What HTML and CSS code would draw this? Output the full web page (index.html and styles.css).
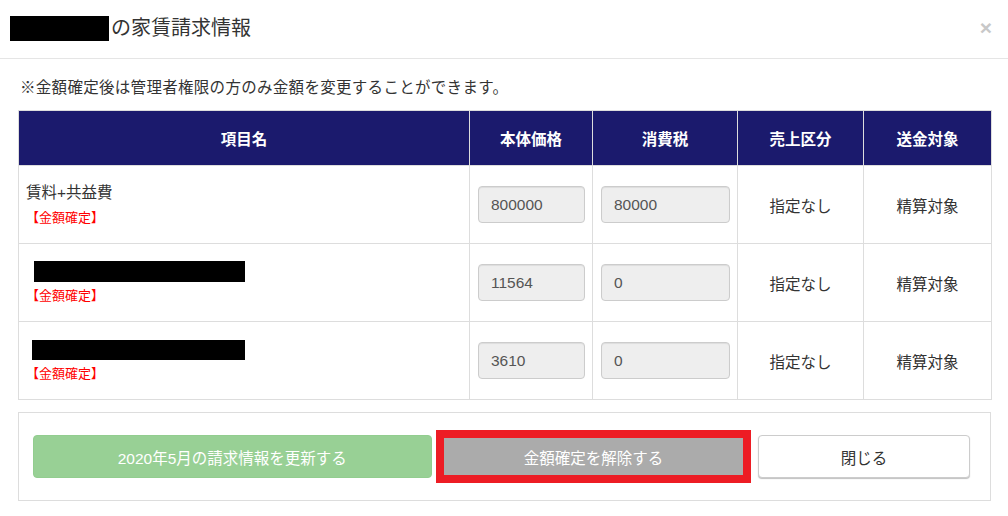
FILE: index.html
```html
<!DOCTYPE html>
<html lang="ja">
<head>
<meta charset="utf-8">
<title>家賃請求情報</title>
<link rel="stylesheet" href="styles.css">
</head>
<body>
<div class="modal">
  <div class="modal-header">
    <h4 class="modal-title"><span class="redact redact-title"></span>の家賃請求情報</h4>
    <span class="close">×</span>
  </div>
  <div class="modal-body">
    <p class="notice">※金額確定後は管理者権限の方のみ金額を変更することができます。</p>
    <table class="bill">
      <colgroup>
        <col class="c-name"><col class="c-price"><col class="c-tax"><col class="c-kind"><col class="c-target">
      </colgroup>
      <thead>
        <tr><th>項目名</th><th>本体価格</th><th>消費税</th><th>売上区分</th><th>送金対象</th></tr>
      </thead>
      <tbody>
        <tr>
          <td class="name"><div class="item">賃料+共益費</div><div class="fixed">【金額確定】</div></td>
          <td class="num"><input class="field" type="text" value="800000" disabled></td>
          <td class="num"><input class="field" type="text" value="80000" disabled></td>
          <td class="center">指定なし</td>
          <td class="center">精算対象</td>
        </tr>
        <tr>
          <td class="name"><div class="item"><span class="redact redact-a"></span></div><div class="fixed">【金額確定】</div></td>
          <td class="num"><input class="field" type="text" value="11564" disabled></td>
          <td class="num"><input class="field" type="text" value="0" disabled></td>
          <td class="center">指定なし</td>
          <td class="center">精算対象</td>
        </tr>
        <tr>
          <td class="name"><div class="item"><span class="redact redact-b"></span></div><div class="fixed">【金額確定】</div></td>
          <td class="num"><input class="field" type="text" value="3610" disabled></td>
          <td class="num"><input class="field" type="text" value="0" disabled></td>
          <td class="center">指定なし</td>
          <td class="center">精算対象</td>
        </tr>
      </tbody>
    </table>
    <div class="actions">
      <button class="btn btn-update" type="button">2020年5月の請求情報を更新する</button>
      <div class="highlight"><button class="btn btn-release" type="button">金額確定を解除する</button></div>
      <button class="btn btn-close" type="button">閉じる</button>
    </div>
  </div>
</div>
</body>
</html>
```

FILE: styles.css
```css
* { box-sizing: border-box; }
html, body {
  margin: 0;
  padding: 0;
  background: #fff;
}
body {
  font-family: "Liberation Sans", "Noto Sans CJK JP", sans-serif;
  font-size: 15.5px;
  color: #333;
}
.modal {
  width: 1008px;
}
.modal-header {
  height: 59px;
  border-bottom: 1px solid #e5e5e5;
  display: flex;
  align-items: center;
  justify-content: space-between;
  padding: 0 16px 2px 10px;
}
.modal-title {
  margin: 0;
  font-size: 20px;
  font-weight: normal;
  line-height: 26px;
  display: flex;
  align-items: center;
  color: #333;
}
.redact {
  display: inline-block;
  background: #000;
}
.redact-title {
  width: 99px;
  height: 25px;
  margin-right: 2px;
}
.close {
  font-size: 21px;
  font-weight: bold;
  color: #c8c8c8;
  line-height: 1;
  margin-top: -2px;
}
.modal-body {
  padding: 18px 17px 0 18px;
}
.notice {
  margin: 0 0 11px 2px;
  line-height: 22px;
  letter-spacing: 0.3px;
}
.bill {
  width: 973px;
  border-collapse: collapse;
  table-layout: fixed;
  border: 1px solid #ddd;
}
.c-name { width: 451px; }
.c-price { width: 123px; }
.c-tax { width: 145px; }
.c-kind { width: 126px; }
.c-target { width: 128px; }
.bill th {
  background: #1b1a6d;
  color: #fff;
  font-weight: bold;
  height: 55px;
  text-align: center;
  border: 1px solid #ddd;
  padding: 0 8px;
}
.bill td {
  height: 78px;
  border: 1px solid #ddd;
  padding: 0 8px;
  vertical-align: middle;
}
.bill td.name {
  padding-left: 7px;
}
.bill td.num {
  padding: 0 7px 0 8px;
}
.center {
  text-align: center;
}
.item {
  line-height: 22px;
  height: 22px;
  display: flex;
  align-items: center;
}
.redact-a {
  width: 211px;
  height: 21px;
  margin-left: 8px;
}
.redact-b {
  width: 213px;
  height: 20px;
  margin-left: 6px;
  margin-top: 2px;
}
.fixed {
  color: #f00;
  font-size: 13px;
  line-height: 18px;
  margin-top: 5px;
}
.field {
  display: block;
  width: 100%;
  height: 37px;
  padding: 0 12px;
  border: 1px solid #ccc;
  border-radius: 4px;
  background: #eee;
  color: #555;
  font-family: inherit;
  font-size: 15.5px;
  box-shadow: inset 0 1px 1px rgba(0,0,0,.075);
}
.actions {
  margin-top: 12px;
  width: 973px;
  border: 1px solid #ddd;
  padding: 17px 20px 17px 14px;
  display: flex;
  align-items: center;
}
.btn {
  font-family: inherit;
  font-size: 15.5px;
  height: 43px;
  border-radius: 4px;
  border: 1px solid transparent;
  padding: 0;
  cursor: pointer;
}
.btn-update {
  width: 399px;
  background: #98d095;
  border-color: #92cd8f;
  color: #fff;
}
.highlight {
  margin-left: 4px;
  width: 316px;
  height: 53px;
  border: 8px solid #ed1c24;
  display: flex;
}
.btn-release {
  width: 100%;
  height: 100%;
  border: 0;
  border-radius: 0;
  background: #ababab;
  color: #fff;
}
.btn-close {
  margin-left: 7px;
  width: 212px;
  background: #fff;
  border-color: #ccc;
  color: #333;
  box-shadow: 0 1px 1px rgba(0,0,0,.25);
}
```
